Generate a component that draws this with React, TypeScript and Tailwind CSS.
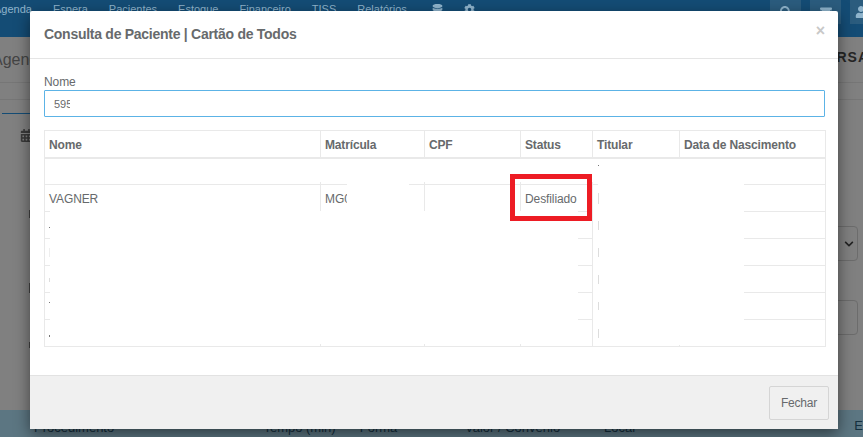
import React from "react";
import { FaCalendarAlt, FaChevronDown, FaCog, FaDatabase, FaEnvelope, FaSearch, FaUser } from "react-icons/fa";

const navItems = ["Agenda", "Espera", "Pacientes", "Estoque", "Financeiro", "TISS", "Relatórios"];
const columns = ["Nome", "Matrícula", "CPF", "Status", "Titular", "Data de Nascimento"];
const emptyRows = [0, 1, 2, 3, 4];

function Background() {
  return (
    <div className="relative flex h-[437px] w-[863px] flex-col bg-[#808080] text-[#3a3a3a]">
      <header className="flex h-[37px] shrink-0 items-start bg-[#144c75] text-[11px] text-[#8fb4cc]">
        <nav className="ml-[-6px] flex items-center gap-[21px] pt-[2px] font-medium leading-[14px]">
          {navItems.map((item) => (
            <span key={item}>{item}</span>
          ))}
          <FaDatabase className="ml-[4px] text-[11px]" />
          <FaCog className="text-[11px]" />
        </nav>
        <div className="ml-auto mr-[-8px] flex gap-[9px]">
          <span className="flex h-[24px] w-[31px] items-center justify-center bg-[#2b5c7e]"><FaSearch className="text-[12px]" /></span>
          <span className="flex h-[24px] w-[31px] items-center justify-center bg-[#2b5c7e]"><FaEnvelope className="text-[12px]" /></span>
          <span className="flex h-[24px] w-[21px] items-center justify-center bg-[#2b5c7e]"><FaUser className="text-[12px]" /></span>
        </div>
      </header>
      <div className="flex h-[46px] shrink-0 items-center justify-between border-b border-[#767676]">
        <span className="ml-[-8px] text-[16px] text-[#444444]">Agenda</span>
        <span className="mr-[-6px] translate-y-[-2px] text-[14px] font-bold tracking-[1px] text-[#252525]">CORSA</span>
      </div>
      <div className="h-[17px] shrink-0 border-b border-[#767676]" />
      <div className="flex h-[14px] shrink-0">
        <span className="ml-[2px] mt-[13px] h-[1px] w-[28px] bg-[#144c75]" />
      </div>
      <div className="ml-[20px] mt-[15px] flex h-[13px] shrink-0 text-[#3a3a3a]">
        <FaCalendarAlt className="text-[13px]" />
      </div>
      <div className="ml-auto mr-[5px] mt-[84px] flex h-[35px] w-[60px] shrink-0 items-center justify-end rounded border border-[#6c6c6c] pr-[3px]">
        <FaChevronDown className="text-[10px] text-[#222222]" />
      </div>
      <div className="ml-auto mr-[5px] mt-[39px] h-[35px] w-[60px] shrink-0 rounded border border-[#6c6c6c]" />
      <div className="mt-[75px] flex flex-1 items-end bg-[#5c7682] pl-[34px] text-[13px] leading-[16px] text-[#14303f]">
        <span className="w-[231px] translate-y-[-1px]">Procedimento</span>
        <span className="w-[97px] translate-y-[-1px]">Tempo (min)</span>
        <span className="w-[106px] translate-y-[-1px]">Forma</span>
        <span className="w-[140px] translate-y-[-1px]">Valor / Convênio</span>
        <span className="w-[252px] translate-y-[-1px]">Local</span>
        <span className="translate-y-[-3px]">E</span>
      </div>
      <span className="absolute left-[29px] top-[210px] h-[8px] w-[1px] bg-[#444444]" />
      <span className="absolute left-[29px] top-[283px] h-[10px] w-[1px] bg-[#444444]" />
      <span className="absolute left-[29px] top-[342px] h-[6px] w-[1px] bg-[#444444]" />
    </div>
  );
}

function ResultsTable() {
  return (
    <div className="relative mt-[13px] h-[217px] w-[781px]">
      <table className="w-[781px] table-fixed border-collapse text-[12px] tracking-[-0.1px] text-[#676a6c]">
        <colgroup>
          <col className="w-[276px]" />
          <col className="w-[104px]" />
          <col className="w-[96px]" />
          <col className="w-[72px]" />
          <col className="w-[87px]" />
          <col className="w-[146px]" />
        </colgroup>
        <thead>
          <tr className="h-[27px]">
            {columns.map((c) => (
              <th key={c} className="border border-b-2 border-[#e9e9e9] pl-[4px] pt-[2px] text-left font-bold tracking-[-0.15px]">{c}</th>
            ))}
          </tr>
        </thead>
        <tbody>
          <tr className="h-[27px]">
            {columns.map((c) => (
              <td key={c} className="border border-[#e9e9e9]" />
            ))}
          </tr>
          <tr className="h-[27px]">
            <td className="border border-[#e9e9e9] pl-[4px] pt-[1px]">VAGNER</td>
            <td className="border border-[#e9e9e9] pl-[4px] pt-[1px]">MG0</td>
            <td className="border border-[#e9e9e9]" />
            <td className="border border-[#e9e9e9] pl-[4px] pt-[1px]">Desfiliado</td>
            <td className="border border-[#e9e9e9]" />
            <td className="border border-[#e9e9e9]" />
          </tr>
          {emptyRows.map((r) => (
            <tr key={r} className="h-[27px]">
              {columns.map((c) => (
                <td key={c} className="border border-[#e9e9e9]" />
              ))}
            </tr>
          ))}
        </tbody>
      </table>

      {/* Areas blanked out in the original picture */}
      <div className="absolute left-[1px] top-[29px] h-[23px] w-[553px] bg-white" />
      <div className="absolute left-[303px] top-[54px] h-[28px] w-[62px] bg-white" />
      <div className="absolute left-[6px] top-[81px] h-[133px] w-[528px] bg-white" />
      <div className="absolute left-[549px] top-[81px] h-[133px] w-[5px] bg-white" />
      <div className="absolute left-[554px] top-[29px] h-[186px] w-[146px] bg-white" />

      {/* Clipped remains of the blanked-out text */}
      <span className="absolute left-[554px] top-[35px] h-[1px] w-[1px] bg-[#777777]" />
      <span className="absolute left-[554px] top-[63px] h-[11px] w-[1px] bg-[#dddddd]" />
      <span className="absolute left-[554px] top-[91px] h-[9px] w-[1px] bg-[#dddddd]" />
      <span className="absolute left-[554px] top-[118px] h-[9px] w-[1px] bg-[#dddddd]" />
      <span className="absolute left-[554px] top-[145px] h-[9px] w-[1px] bg-[#dddddd]" />
      <span className="absolute left-[554px] top-[172px] h-[8px] w-[1px] bg-[#dddddd]" />
      <span className="absolute left-[554px] top-[199px] h-[9px] w-[1px] bg-[#dddddd]" />
      <span className="absolute left-[5px] top-[97px] h-[1px] w-[1px] bg-[#777777]" />
      <span className="absolute left-[5px] top-[118px] h-[9px] w-[1px] bg-[#eeeeee]" />
      <span className="absolute left-[5px] top-[148px] h-[4px] w-[1px] bg-[#dddddd]" />
      <span className="absolute left-[5px] top-[172px] h-[1px] w-[1px] bg-[#777777]" />
      <span className="absolute left-[5px] top-[205px] h-[2px] w-[1px] bg-[#777777]" />

      {/* Red highlight drawn over the status cell */}
      <div className="absolute left-[466px] top-[44px] h-[47px] w-[82px] border-[5px] border-[#ed1c24]" />
    </div>
  );
}

function Modal() {
  return (
    <div className="absolute left-[30px] top-[11px] flex h-[418px] w-[808px] flex-col rounded-[2px] bg-white text-[#676a6c] shadow-[0_5px_15px_rgba(0,0,0,0.5)]">
      <div className="flex h-[48px] shrink-0 items-center justify-between border-b border-[#e5e5e5] pl-[14px] pr-[13px]">
        <h4 className="text-[14px] font-bold tracking-[-0.27px]">Consulta de Paciente | Cartão de Todos</h4>
        <span className="translate-y-[-4px] text-[16px] font-bold leading-none text-[#c8c8c8]">×</span>
      </div>
      <div className="flex-1 pl-[14px] pt-[16px]">
        <label className="block text-[12px] leading-[15px] tracking-[-0.1px]">Nome</label>
        <div className="relative w-[781px]">
          <input
            readOnly
            value="595"
            className="block h-[27px] w-[781px] rounded-[1px] border border-[#5cb3e6] px-[9px] text-[11px] text-[#676a6c] outline-none"
          />
          <span className="absolute left-[26px] top-[2px] h-[23px] w-[6px] bg-white" />
        </div>
        <ResultsTable />
      </div>
      <div className="flex h-[54px] shrink-0 items-center justify-end border-t border-[#e2e2e2] bg-[#f0f0f0] pr-[9px]">
        <button className="h-[34px] w-[60px] rounded-[2px] border border-[#d5d5d5] bg-[#f0f0f0] text-[12px] tracking-[-0.2px] text-[#676a6c]">Fechar</button>
      </div>
    </div>
  );
}

export default function App() {
  return (
    <div className="relative h-[437px] w-[863px] overflow-hidden font-['Liberation_Sans',Arial,sans-serif]">
      <Background />
      <Modal />
    </div>
  );
}
